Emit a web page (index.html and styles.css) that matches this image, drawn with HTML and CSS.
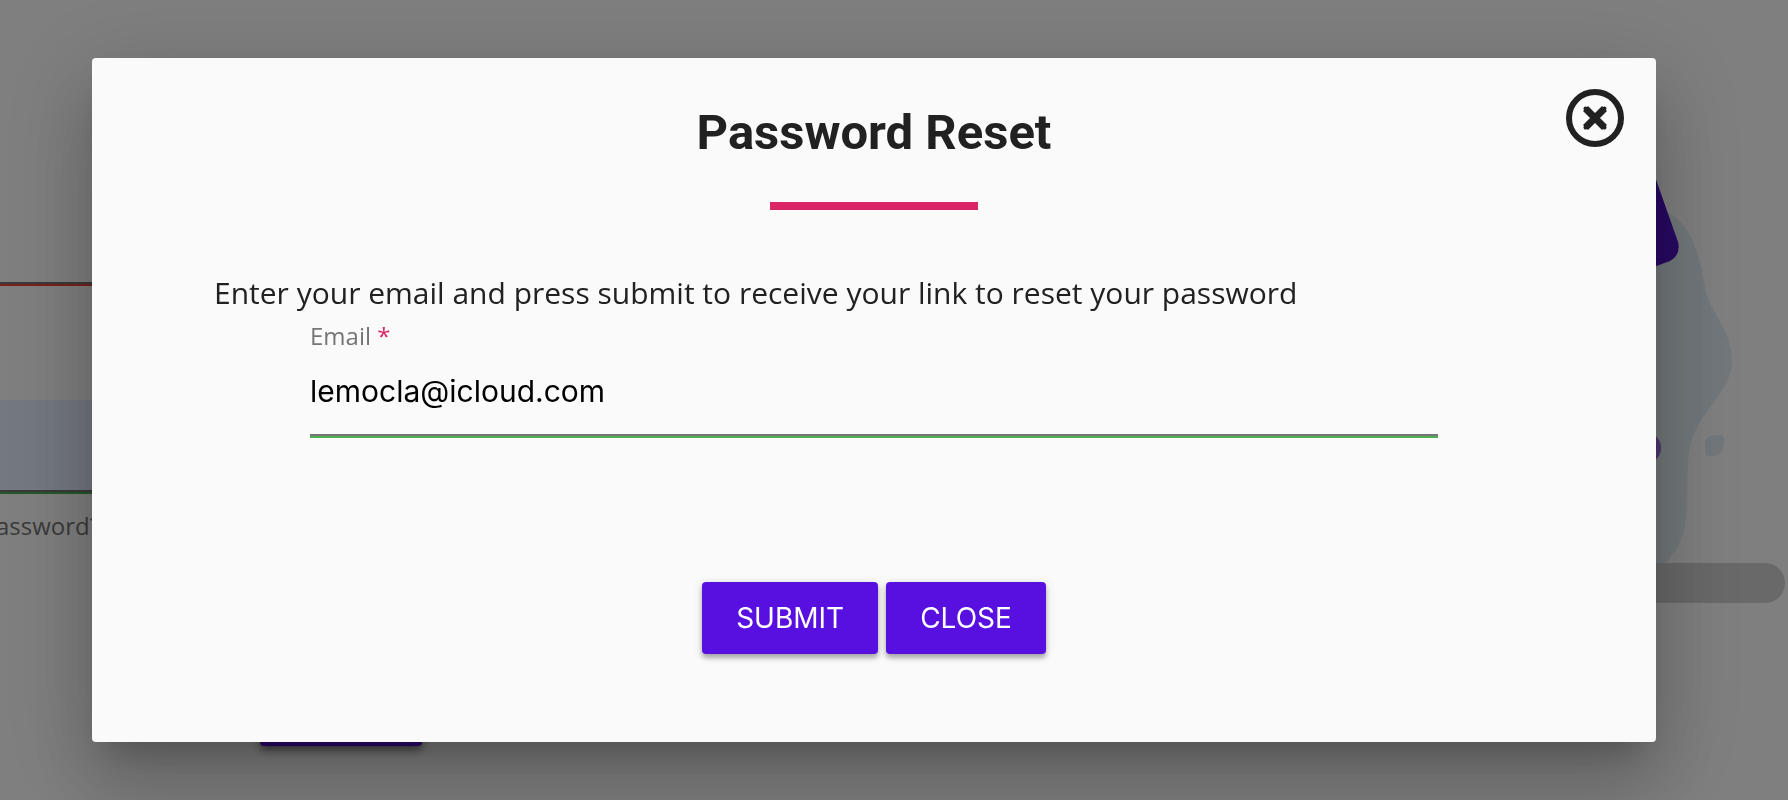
FILE: index.html
```html
<!DOCTYPE html>
<html lang="en">
<head>
<meta charset="utf-8">
<meta name="viewport" content="width=device-width, initial-scale=1">
<title>Password Reset</title>
<link rel="stylesheet" href="styles.css">
</head>
<body>
<main class="page" inert>
  <form class="login">
    <input class="login-input login-input-invalid" type="text" aria-label="User name">
    <input class="login-input login-input-valid" type="password" aria-label="Login password">
    <a class="login-forgot" href="#">assword?</a>
    <button class="login-button" type="button" aria-label="Log in"></button>
  </form>
  <svg class="art" viewBox="1488 0 300 800" aria-hidden="true">
    <path fill="#e4eff6" d="M1600 190C1640 200 1656 207 1670 214C1691 225 1700 254 1706 292C1711 314 1732 330 1732 362C1732 392 1697 412 1690 447C1685 474 1690 500 1684 530C1681 543 1675 553 1664 565H1600Z"/>
    <path fill="#5010c8" d="M1640 134L1678 242Q1681 255 1670 261L1640 272Z"/>
    <ellipse cx="1649" cy="448" rx="12" ry="14" fill="#9a6fe0"/>
    <path fill="#e4eff6" d="M1711 436L1718 435Q1725 434 1724 442L1723 448Q1721 455 1714 456L1711 456Q1705 456 1705 451L1705 443Q1706 437 1711 436Z"/>
    <rect x="1500" y="563" width="285" height="40" rx="20" fill="#d2d2d2"/>
  </svg>
</main>
<div class="overlay">
  <section class="dialog" role="dialog" aria-modal="true" aria-labelledby="dialog-title">
    <button class="dismiss" type="button" aria-label="Dismiss">
      <svg class="dismiss-icon" viewBox="0 0 58 58" aria-hidden="true">
        <circle cx="29" cy="29" r="26" fill="none" stroke="currentColor" stroke-width="6"/>
        <path d="M19.500 19.500L38.500 38.500M38.500 19.500L19.500 38.500" fill="none" stroke="currentColor" stroke-width="7"/>
        <path d="M19.500 19.500L38.500 38.500M38.500 19.500L19.500 38.500" fill="none" stroke="currentColor" stroke-width="4" stroke-linecap="round"/>
      </svg>
    </button>
    <h1 class="title" id="dialog-title">Password Reset</h1>
    <hr class="rule">
    <form class="reset">
      <p class="intro">Enter your email and press submit to receive your link to reset your password</p>
      <div class="field">
        <label class="field-label" for="email">Email <span class="required">*</span></label>
        <input class="field-input" id="email" type="email" value="lemocla@icloud.com" required>
      </div>
      <div class="actions">
        <button class="action" type="button">SUBMIT</button>
        <button class="action" type="button">CLOSE</button>
      </div>
    </form>
  </section>
</div>
</body>
</html>
```
FILE: styles.css
```css
* {
  box-sizing: border-box;
}

body {
  margin: 0;
  min-height: 100vh;
  overflow: hidden;
  background: #fff;
  color: #212121;
  font-family: "Open Sans", "Noto Sans", sans-serif;
}

/* Login page behind the dialog */
.page {
  display: flex;
  justify-content: space-between;
  height: 100vh;
  overflow: hidden;
}

.login {
  display: flex;
  flex-direction: column;
  align-items: flex-start;
  width: 700px;
  padding-top: 192px;
}

.login-input {
  width: 100%;
  height: 94px;
  border: 0;
  border-bottom: 2px solid #757575;
}

.login-input-invalid {
  margin-bottom: 114px;
  border-bottom-color: #f44336;
  background: linear-gradient(#757575, #757575) bottom / 100% 2px no-repeat;
}

.login-input-valid {
  border-bottom-color: #4caf50;
  background: linear-gradient(#757575, #757575) bottom / 100% 2px no-repeat, #e8f0fe;
}

.login-forgot {
  margin: 14px 0 0 -4px;
  color: #757575;
  font-size: 24px;
  line-height: 36px;
  text-decoration: none;
}

.login-button {
  width: 162px;
  height: 72px;
  margin: 130px 0 0 260px;
  border: 0;
  border-radius: 4px;
  background: #5810e0;
  box-shadow: 0 4px 8px rgba(0, 0, 0, 0.5);
}

.art {
  width: 300px;
  height: 800px;
}

/* Dialog */
.overlay {
  position: fixed;
  inset: 0;
  padding: 58px 132px 58px 92px;
  background: rgba(0, 0, 0, 0.5);
}

.dialog {
  position: relative;
  display: flex;
  flex-direction: column;
  align-items: center;
  padding: 45px 122px 88px;
  border-radius: 4px;
  background: #fafafa;
  box-shadow:
    0 22px 30px -14px rgba(0, 0, 0, 0.2),
    0 48px 76px 6px rgba(0, 0, 0, 0.14),
    0 18px 92px 16px rgba(0, 0, 0, 0.12);
}

.dismiss {
  position: absolute;
  top: 31px;
  right: 32px;
  padding: 0;
  border: 0;
  background: none;
  color: #212121;
}

.dismiss-icon {
  display: block;
  width: 58px;
  height: 58px;
}

.title {
  margin: 0;
  font-family: Roboto, sans-serif;
  font-size: 49px;
  font-weight: 700;
  line-height: 60px;
}

.rule {
  width: 208px;
  height: 8px;
  margin: 39px 0 0;
  border: 0;
  background: #dc2566;
}

.reset {
  width: 100%;
}

.intro {
  margin: 63px 0 0;
  font-size: 30px;
  line-height: 40px;
}

.field {
  display: flex;
  flex-direction: column;
  margin: 5px 96px 0;
}

.field-label {
  color: #757575;
  font-size: 24px;
  line-height: 36px;
}

.required {
  color: #dc2566;
}

.field-input {
  height: 84px;
  padding: 0 0 8px;
  border: 0;
  border-bottom: 2px solid #4caf50;
  outline: 0;
  background: linear-gradient(#757575, #757575) bottom / 100% 2px no-repeat;
  color: #000;
  font-family: Inter, sans-serif;
  font-size: 30px;
}

.actions {
  display: flex;
  justify-content: center;
  gap: 8px;
  margin-top: 144px;
}

.action {
  height: 72px;
  padding: 0 34px;
  border: 0;
  border-radius: 4px;
  background: #5810e0;
  box-shadow: 0 4px 4px rgba(0, 0, 0, 0.24), 0 2px 10px rgba(0, 0, 0, 0.16);
  color: #fff;
  font-family: Inter, sans-serif;
  font-size: 28px;
}
```
